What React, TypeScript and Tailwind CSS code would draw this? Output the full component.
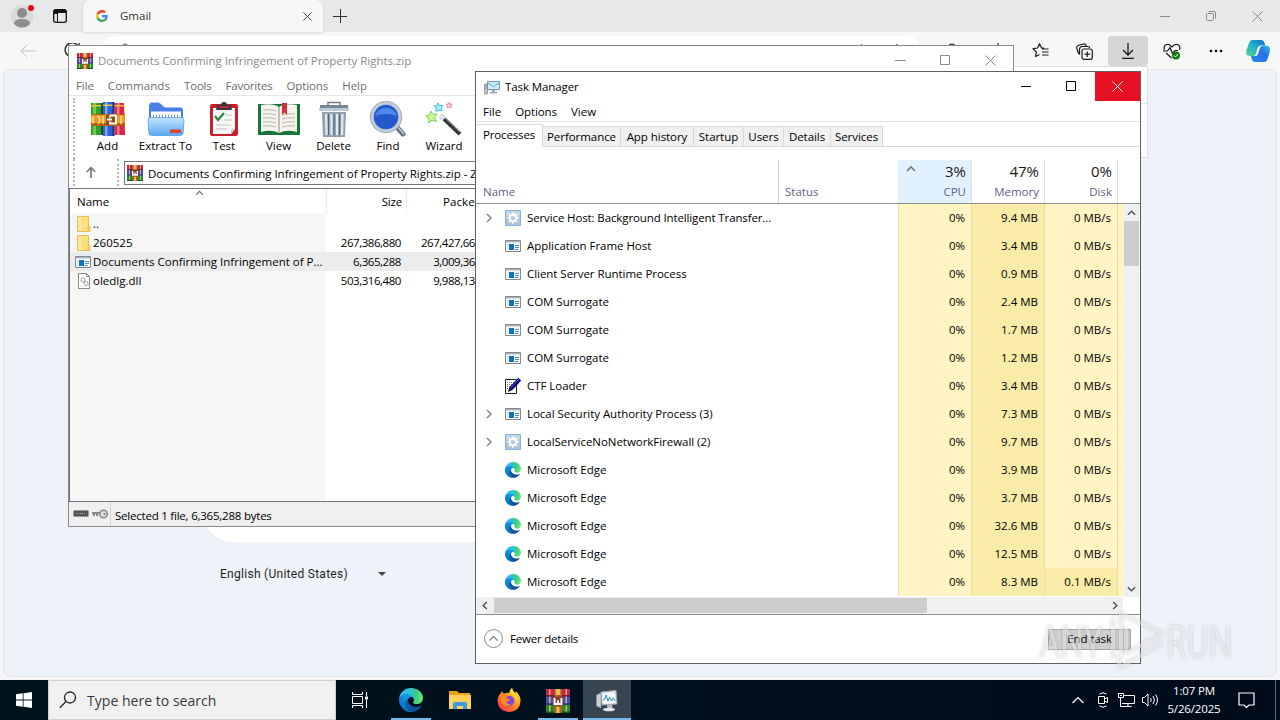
import type { ReactNode } from "react";

type Kind = "gear" | "app" | "ctf" | "edge";

const processes: { name: string; icon: Kind; group?: boolean; mem: string; disk: string }[] = [
  { name: "Service Host: Background Intelligent Transfer...", icon: "gear", group: true, mem: "9.4 MB", disk: "0 MB/s" },
  { name: "Application Frame Host", icon: "app", mem: "3.4 MB", disk: "0 MB/s" },
  { name: "Client Server Runtime Process", icon: "app", mem: "0.9 MB", disk: "0 MB/s" },
  { name: "COM Surrogate", icon: "app", mem: "2.4 MB", disk: "0 MB/s" },
  { name: "COM Surrogate", icon: "app", mem: "1.7 MB", disk: "0 MB/s" },
  { name: "COM Surrogate", icon: "app", mem: "1.2 MB", disk: "0 MB/s" },
  { name: "CTF Loader", icon: "ctf", mem: "3.4 MB", disk: "0 MB/s" },
  { name: "Local Security Authority Process (3)", icon: "app", group: true, mem: "7.3 MB", disk: "0 MB/s" },
  { name: "LocalServiceNoNetworkFirewall (2)", icon: "gear", group: true, mem: "9.7 MB", disk: "0 MB/s" },
  { name: "Microsoft Edge", icon: "edge", mem: "3.9 MB", disk: "0 MB/s" },
  { name: "Microsoft Edge", icon: "edge", mem: "3.7 MB", disk: "0 MB/s" },
  { name: "Microsoft Edge", icon: "edge", mem: "32.6 MB", disk: "0 MB/s" },
  { name: "Microsoft Edge", icon: "edge", mem: "12.5 MB", disk: "0 MB/s" },
  { name: "Microsoft Edge", icon: "edge", mem: "8.3 MB", disk: "0.1 MB/s" },
];

const files = [
  { name: "..", icon: "folder", size: "", packed: "" },
  { name: "260525", icon: "folder", size: "267,386,880", packed: "267,427,66" },
  { name: "Documents Confirming Infringement of P...", icon: "app", size: "6,365,288", packed: "3,009,36" },
  { name: "oledlg.dll", icon: "dll", size: "503,316,480", packed: "9,988,13" },
];

const tabs = [
  { label: "Performance", width: "w-[78px]" },
  { label: "App history", width: "w-[73px]" },
  { label: "Startup", width: "w-[50px]" },
  { label: "Users", width: "w-[40px]" },
  { label: "Details", width: "w-[47px]" },
  { label: "Services", width: "w-[52px]" },
];

/* ---------- icons ---------- */

function EdgeIcon({ className }: { className: string }) {
  return (
    <svg viewBox="0 0 256 256" className={className}>
      <defs>
        <linearGradient id="edgeA" x1="60" y1="177" x2="241" y2="177" gradientUnits="userSpaceOnUse">
          <stop offset="0" stopColor="#0c59a4" />
          <stop offset="1" stopColor="#114a8b" />
        </linearGradient>
        <linearGradient id="edgeB" x1="150" y1="100" x2="42" y2="222" gradientUnits="userSpaceOnUse">
          <stop offset="0" stopColor="#1b9de2" />
          <stop offset=".3" stopColor="#1595df" />
          <stop offset=".7" stopColor="#0680d7" />
          <stop offset="1" stopColor="#0078d4" />
        </linearGradient>
        <radialGradient id="edgeC" cx="26" cy="48" r="235" gradientUnits="userSpaceOnUse">
          <stop offset="0" stopColor="#35c1f1" />
          <stop offset=".3" stopColor="#2fbde6" />
          <stop offset=".65" stopColor="#36c98f" />
          <stop offset="1" stopColor="#66eb6e" />
        </radialGradient>
      </defs>
      <path fill="url(#edgeA)" d="M231 190.500c-3.400 1.800-6.900 3.400-10.400 4.700a101.800 101.800 0 0 1-35.900 6.500c-47.400 0-88.600-32.600-88.600-74.300a31.500 31.500 0 0 1 16.400-27.300c-42.800 1.800-53.800 46.400-53.800 72.500 0 73.900 68.100 81.400 82.800 81.400 7.900 0 19.800-2.300 27-4.600l1.300-.4a128.400 128.400 0 0 0 66.600-52.800 4 4 0 0 0-5.400-5.700z" />
      <path fill="url(#edgeB)" d="M105.700 241.400a79.200 79.200 0 0 1-22.700-21.300 80.700 80.700 0 0 1 29.500-120c3.100-1.500 8.500-4.100 15.500-4a32.400 32.400 0 0 1 25.700 13 31.900 31.900 0 0 1 6.300 18.700c0-.2 24.500-79.600-80-79.600-43.900 0-80 41.600-80 78.200a130.200 130.200 0 0 0 12.100 56 128 128 0 0 0 156.400 67.100 75.600 75.600 0 0 1-62.800-8z" />
      <path fill="url(#edgeC)" d="M152.300 148.900c-.8 1-3.300 2.500-3.300 5.600 0 2.600 1.700 5.100 4.700 7.200 14.400 10 41.500 8.700 41.600 8.700a59.600 59.600 0 0 0 30.300-8.400 61.400 61.400 0 0 0 30.400-52.800c.3-22.400-8-37.300-11.300-43.900C223.500 23.800 177.700 0 128 0A128 128 0 0 0 0 126.200c.5-36.500 36.800-66 80-66 3.500 0 23.500.3 42 10 16.300 8.600 24.900 19 30.900 29.200 6.200 10.700 7.200 24.200 7.200 29.500s-2.700 13.400-7.800 20z" />
    </svg>
  );
}

function RarIcon({ className }: { className: string }) {
  return (
    <svg viewBox="0 0 16 16" className={className}>
      <path fill="#c2245c" d="M0 0h16v5H0z" />
      <path fill="#3b52c4" d="M0 5h16v5.500H0z" />
      <path fill="#1e8a3c" d="M0 10.500h16V16H0z" />
      <path fill="#7a1638" d="M0 4h16v1H0z" />
      <path fill="#202f7c" d="M0 9.500h16v1H0z" />
      <path fill="#0d5522" d="M0 15h16v1H0z" />
      <path fill="#e9b23c" d="M2 0h1v4H2zM13 0h1v4h-1zM2 5h1v4.500H2zM13 5h1v4.500h-1zM2 11h1v4H2zM13 11h1v4h-1z" />
      <path fill="#b9601c" d="M5.500 0h5v16h-5z" />
      <path fill="#f2bd4b" d="M6.500 0h3v4h-3zM7 12h2v4H7z" />
      <path fill="#8f3a28" d="M4.500 5h7v6h-7z" />
      <path fill="none" stroke="#fff" strokeWidth="1.300" d="M5.700 6v4h4.600V6M8 7.500V10" />
    </svg>
  );
}

function AppIcon({ className }: { className: string }) {
  return (
    <svg viewBox="0 0 16 16" className={className}>
      <path fill="#fff" stroke="#7f8b96" d="M.5 2.500h15v11H.5z" />
      <path fill="#a9b5c0" d="M1 3h14v1.500H1z" />
      <path fill="#0d72c7" d="M4 6h5v6H4z" />
      <path fill="#cfe3f4" d="M2 6h1v6H2z" />
      <path stroke="#4f8fc9" d="M10 7.500h4M10 9.500h4M10 11.500h3" />
    </svg>
  );
}

function GearIcon() {
  return (
    <svg viewBox="0 0 16 16" className="size-4">
      <path fill="#a9c5df" stroke="#8fb0cf" d="M.5.5h15v15H.5z" />
      <path fill="#c0d6ea" d="M1 1h14v6H1z" />
      <circle cx="8" cy="8" r="3.200" fill="none" stroke="#fff" strokeWidth="2" />
      <path stroke="#fff" strokeWidth="2" d="M8 2.500v2M8 11.500v2M2.500 8h2M11.500 8h2M4.100 4.100l1.400 1.400M10.500 10.500l1.400 1.400M4.100 11.900l1.400-1.400M10.500 5.500l1.400-1.400" />
    </svg>
  );
}

function CtfIcon() {
  return (
    <svg viewBox="0 0 16 16" className="size-4">
      <path fill="#fff" stroke="#222" d="M.5 1.500h11v14H.5z" />
      <path stroke="#777" strokeDasharray="1 1" d="M2 4.500h8M2 6.500h8M2 8.500h6M2 10.500h4" />
      <path stroke="#0a0a78" strokeWidth="4" d="M14.800 1.200 5.500 11" />
      <path stroke="#8d93dd" strokeWidth=".6" d="M14 1 6 9.500" />
      <path fill="#111" d="m3 14 1.300-4.300L7 12.200z" />
    </svg>
  );
}

function ProcessIcon({ kind }: { kind: Kind }) {
  if (kind === "gear") return <GearIcon />;
  if (kind === "ctf") return <CtfIcon />;
  if (kind === "edge") return <EdgeIcon className="size-4" />;
  return <AppIcon className="size-4" />;
}

function MonitorIcon({ className }: { className: string }) {
  return (
    <svg viewBox="0 0 16 16" className={className}>
      <path fill="#b9c3cb" stroke="#7d8b96" strokeWidth=".7" d="M.5 5h3v10h-3z" />
      <path stroke="#5f6d78" strokeWidth=".6" d="M1 7h2M1 9h2" />
      <path fill="#c9eef9" stroke="#7d929e" d="M3.500 2.500h12v8h-12z" />
      <path fill="none" stroke="#3b8ba5" strokeWidth=".8" d="m4 4.500 3 1L9.500 8 12 5.500l3-1" />
      <path fill="#9faab2" d="M8 11h3v2H8zM6 13h7v1.500H6z" />
    </svg>
  );
}

function FolderIcon() {
  return (
    <svg viewBox="0 0 14 16" className="h-4 w-[14px]">
      <path fill="#fbdf82" stroke="#e5be50" d="M.5.5h11v15H.5z" />
      <path fill="#ffe9a0" d="M1 1h3v14H1z" />
      <path fill="#f9d566" stroke="#e2b443" strokeWidth=".7" d="M11 10.500h2v5h-2z" />
    </svg>
  );
}

function DllIcon() {
  return (
    <svg viewBox="0 0 14 16" className="h-4 w-[14px]">
      <path fill="#fff" stroke="#8a8a8a" d="M1.500.5h8l3 3v12h-11z" />
      <path fill="none" stroke="#8a8a8a" d="M9.500.5v3h3" />
      <circle cx="6" cy="7" r="2" fill="none" stroke="#8d97a1" strokeWidth="1.300" strokeDasharray="1 .6" />
      <circle cx="9" cy="10.500" r="2" fill="none" stroke="#8d97a1" strokeWidth="1.300" strokeDasharray="1 .6" />
    </svg>
  );
}

function AddIcon() {
  return (
    <svg viewBox="0 0 34 34" className="h-[34px] w-[34px]">
      <path fill="#2f9e2d" d="M0 1h11v32H0z" />
      <path fill="#2f62d8" d="M12 0h11v34H12z" />
      <path fill="#dd2447" d="M23.500 1H33l1 32H23.500z" />
      <path fill="#6fc94a" d="M2 1h3v32H2z" />
      <path fill="#7ba8ff" d="M14 0h2.500v34H14z" />
      <path fill="#ff7a8b" d="M26 1h2.500v32H26z" />
      <path fill="#efc43d" d="M0 3h11v1.500H0zM12 2.500h11V4H12zM23.500 3H34v1.500H23.500z" />
      <path fill="#14511b" d="M10 1h2v32h-2z" />
      <path fill="#152f77" d="M21.500 0h2v34h-2z" />
      <path fill="#b5600f" d="M0 12h34v12H0z" />
      <path fill="#ec9c2c" d="M0 13h34v8H0z" />
      <path fill="#8d4c1e" d="M15 13h9v10h-9z" />
      <path fill="none" stroke="#fff" strokeWidth="1.800" d="M19 13.500h6v8h-6v-2M19 13.500v2M16 17.500h5" />
      <path fill="none" stroke="#fbe09a" strokeWidth="1.500" d="M2 14.500v7M7 14q4 4 0 8M12 14v8M30 14v8" />
    </svg>
  );
}

function ExtractIcon() {
  return (
    <svg viewBox="0 0 38 34" className="h-[34px] w-[38px]">
      <defs>
        <linearGradient id="fold" x1="0" y1="0" x2="0" y2="1">
          <stop offset="0" stopColor="#c3e4ff" />
          <stop offset="1" stopColor="#5aa8f2" />
        </linearGradient>
      </defs>
      <path fill="#4c7ee8" d="M2 4q0-3.500 3-3.500h6q2 0 4 2.500t4 2.500h14q3 0 3 3V20H2z" />
      <path fill="#fff" d="M4 9.500h30V19H4z" />
      <path stroke="#7d93ad" strokeWidth="3" strokeDasharray="1 2" d="M6 14h26" />
      <path fill="url(#fold)" stroke="#5b9fe6" strokeWidth=".8" d="M1 18q0-2.500 2.500-2.500h31Q37 15.500 37 18l-.8 12.500q0 3-3.200 3H5q-3.200 0-3.200-3z" />
      <path fill="#d9432f" d="M23 27.500h11V31H23z" />
    </svg>
  );
}

function TestIcon() {
  return (
    <svg viewBox="0 0 28 34" className="h-[34px] w-[28px]">
      <rect x="0" y="2" width="28" height="32" rx="2" fill="#c8202f" />
      <path fill="#f8f8f6" d="M3 6h22v21l-4 5H3z" />
      <path fill="#3a3a3e" d="M7 3h4q0-3 3-3t3 3h4l1 5H6z" />
      <path fill="#bd2b38" d="M9 4h10v2H9z" />
      <path fill="none" stroke="#2c8a48" strokeWidth="2.200" d="m5 14 3 4 6-7" />
      <path stroke="#bfc1c5" strokeWidth="1.200" d="M15 13h7M14 18h8M6 23h15M6 27h11" />
      <path fill="#cfcfd3" d="m25 27-4 5v-5z" />
    </svg>
  );
}

function ViewIcon() {
  return (
    <svg viewBox="0 0 42 34" className="h-[34px] w-[42px]">
      <path fill="#15753a" d="M0 2h42v31H0z" />
      <path fill="#f5f3ec" d="M3 3q12-2 18 2v26q-8-4-18-1zM39 3q-12-2-18 2v26q8-4 18-1z" />
      <path stroke="#b9b7ae" d="M5 8q8-1 13 1M5 12q8-1 13 1M5 16q8-1 13 1M5 20q8-1 13 1M5 24q8-1 13 1M37 12q-8-1-13 1M37 16q-8-1-13 1M37 20q-8-1-13 1M37 24q-8-1-13 1" fill="none" />
      <path stroke="#8d8b82" d="M21 5v26" />
      <path fill="#cf2f35" d="M24 1h5v12l-2.500-2.500L24 13z" />
    </svg>
  );
}

function DeleteIcon() {
  return (
    <svg viewBox="0 0 30 36" className="h-[36px] w-[30px]">
      <path fill="none" stroke="#6f7d8c" strokeWidth="1.500" d="M9 5V1.500h12V5" />
      <rect x="1" y="4" width="28" height="3" fill="#76879a" />
      <rect x="0" y="7" width="30" height="3" rx="1" fill="#bcc9d6" />
      <path fill="#8fa0b3" d="M3 11h24l-1 25H4z" />
      <path stroke="#e3ebf2" strokeWidth="2.200" d="M7 13l.5 21M12.500 13v21M18 13v21M23.500 13l-.5 21" />
      <path stroke="#536474" d="M9.500 13v21M15 13v21M20.500 13v21" />
    </svg>
  );
}

function FindIcon() {
  return (
    <svg viewBox="0 0 38 36" className="h-[36px] w-[38px]">
      <path stroke="#65717e" strokeWidth="5" strokeLinecap="round" d="m26 24 8 9" />
      <path stroke="#c6ced6" strokeWidth="1.500" d="m27 24 8 9" />
      <circle cx="17" cy="16" r="14" fill="#2458cd" stroke="#c3cdd7" strokeWidth="3.500" />
      <circle cx="17" cy="16" r="15.800" fill="none" stroke="#7c8996" strokeWidth=".6" />
      <path fill="#4f87ec" d="M6 15a11.500 11.500 0 0 1 22 0q-11-4-22 0z" />
    </svg>
  );
}

function WizardIcon() {
  return (
    <svg viewBox="0 0 36 34" className="h-[34px] w-[36px]">
      <path stroke="#33363a" strokeWidth="4" d="m15 14 19 18" />
      <path stroke="#a9adb2" strokeWidth="1" d="m16 13 18 17" />
      <path stroke="#e2e4e7" strokeWidth="4" d="m14 13 4 4" />
      <path fill="#d3f59a" stroke="#7fd04a" d="m5 9 2 3.500 4-.5-2.500 3.500 2 4-4.500-1.500L3 21v-4.500L-.5 14l4-1z" />
      <path fill="#a8ecfb" stroke="#3fc3e6" d="m12 1 1.500 2.500H17L15 6l1 3-3-1-3 1.500V6L8 4l3-.5z" />
      <path fill="#ffd5db" stroke="#ee7487" strokeWidth=".8" d="m23 .5 1 1.700h2l-1.200 1.500.5 2-2-.8-2 1v-2l-1.300-1.500 2-.3z" />
    </svg>
  );
}

function Chevron({ d, className }: { d: string; className: string }) {
  return (
    <svg viewBox="0 0 10 10" className={className}>
      <path d={d} fill="none" stroke="currentColor" strokeWidth="1.600" />
    </svg>
  );
}

function CloseGlyph({ className }: { className: string }) {
  return (
    <svg viewBox="0 0 11 11" className={className}>
      <path stroke="currentColor" d="m.5.5 10 10m0-10-10 10" />
    </svg>
  );
}

function MaxGlyph() {
  return (
    <svg viewBox="0 0 11 11" className="size-[11px]">
      <path fill="none" stroke="currentColor" d="M.5.5h9v9h-9z" />
    </svg>
  );
}

/* ---------- browser ---------- */

function ToolButton({ children }: { children: ReactNode }) {
  return <div className="flex h-[30px] w-10 items-center justify-center rounded">{children}</div>;
}

function Browser() {
  return (
    <div className="flex h-[680px] flex-col bg-[#f7f7f7]">
      <div className="flex h-8 shrink-0 bg-[#e8e8e8]">
        <div className="flex w-[83px] items-center pl-[10px]">
          <svg viewBox="0 0 26 26" className="size-[26px]">
            <circle cx="12" cy="13.500" r="11.500" fill="#dcdad8" />
            <circle cx="12" cy="10" r="5" fill="#8f8d8b" />
            <path fill="#8f8d8b" d="M4 20.500q0-4.500 8-4.500t8 4.500q-3 4-8 4t-8-4z" />
            <circle cx="21" cy="5" r="3" fill="#d90b17" />
          </svg>
          <svg viewBox="0 0 14 14" className="ml-[17px] size-[14px]">
            <rect x=".7" y=".7" width="12.600" height="12.600" rx="2" fill="none" stroke="#111" strokeWidth="1.300" />
            <path fill="#111" d="M1 1h12v3H1zM1 3h3.500v2H1z" />
            <path stroke="#111" d="M4.500 4v9" />
          </svg>
        </div>
        <div className="flex w-60 items-center rounded-t-lg bg-[#f7f7f7] pl-[13px] shadow">
          <svg viewBox="0 0 48 48" className="size-3">
            <path fill="#EA4335" d="M24 9.500c3.500 0 6.700 1.200 9.200 3.600l6.900-6.900C35.900 2.400 30.500 0 24 0 14.600 0 6.500 5.400 2.600 13.200l8 6.200C12.400 13.700 17.700 9.500 24 9.500z" />
            <path fill="#4285F4" d="M47 24.600c0-1.600-.2-3.100-.4-4.600H24v9h12.900c-.6 3-2.200 5.500-4.700 7.200l7.700 6C44.400 38 47 31.800 47 24.600z" />
            <path fill="#FBBC05" d="M10.500 28.600c-.5-1.500-.8-3-.8-4.600s.3-3.100.8-4.600l-8-6.200A24 24 0 0 0 0 24c0 3.900.9 7.500 2.600 10.800z" />
            <path fill="#34A853" d="M24 48c6.500 0 11.900-2.100 15.900-5.800l-7.700-6c-2.200 1.500-4.900 2.300-8.200 2.300-6.300 0-11.600-4.200-13.500-9.900l-8 6.200C6.500 42.600 14.600 48 24 48z" />
          </svg>
          <span className="ml-3 flex-1 text-[11.500px] text-[#333]">Gmail</span>
          <CloseGlyph className="mr-[11px] size-[9px] text-[#222]" />
        </div>
        <svg viewBox="0 0 14 14" className="mt-[9px] ml-[10px] size-[14px]">
          <path stroke="#333" d="M7.500 0v14M0 7.500h14" />
        </svg>
        <div className="ml-auto flex items-center gap-9 pr-[17px] text-[#8a8a8a]">
          <svg viewBox="0 0 10 10" className="size-[10px]"><path stroke="currentColor" d="M0 5.500h10" /></svg>
          <svg viewBox="0 0 10 10" className="size-[10px]">
            <rect x=".5" y="2.500" width="7" height="7" rx="1" fill="none" stroke="currentColor" />
            <path fill="none" stroke="currentColor" d="M2.500.5H8q1.500 0 1.500 1.500v5.500" />
          </svg>
          <CloseGlyph className="size-[11px]" />
        </div>
      </div>

      <div className="flex h-[37px] shrink-0 items-start pt-1">
        <svg viewBox="0 0 16 14" className="mt-[8px] ml-[20px] h-[14px] w-4">
          <path fill="none" stroke="#c2c2c2" d="M16 7H1m6-6L1 7l6 6" />
        </svg>
        <svg viewBox="0 0 16 16" className="mt-[7px] ml-7 size-4">
          <path fill="none" stroke="#222" strokeWidth="1.300" d="M14.500 4A7 7 0 1 0 15 8M15 0v4.500h-4.500" />
        </svg>
        <div className="ml-[22px] flex h-7 w-[818px] rounded-full bg-white pl-[18px]">
          <svg viewBox="0 0 10 12" className="mt-[7px] h-3 w-[10px]">
            <path fill="none" stroke="#555" d="M2.500 5V3.500a2.500 2.500 0 0 1 5 0V5M1 5h8v6H1z" />
          </svg>
          <svg viewBox="0 0 50 12" className="mt-[6px] ml-auto mr-4 h-3 w-[50px]">
            <path fill="none" stroke="#777" d="m7 2 4 4M40 6l3-4 3 4" />
          </svg>
        </div>
        <svg viewBox="0 0 14 14" className="mt-[7px] ml-[25px] size-[14px]">
          <path fill="none" stroke="#222" strokeWidth="1.200" d="M4 4q0-3 3-3t3 3v6H4z" />
        </svg>
        <svg viewBox="0 0 14 14" className="mt-[7px] ml-[32px] size-[14px]">
          <path fill="none" stroke="#222" strokeWidth="1.200" d="M7 0v9M2 3h10v8H2z" />
        </svg>
        <div className="ml-auto flex gap-[4px] pr-[4px]">
          <ToolButton>
            <svg viewBox="0 0 17 16" className="h-4 w-[17px]">
              <path fill="none" stroke="#1a1a1a" strokeWidth="1.200" strokeLinejoin="round" d="M12 5 9.500 4.800 7.500.8 5.500 5 1 5.700l3.300 3.200-.8 4.600L7.500 11.500M10 6h6.500M10 9h6.500M10 12h6.500" />
            </svg>
          </ToolButton>
          <ToolButton>
            <svg viewBox="0 0 17 17" className="size-[17px]">
              <path fill="none" stroke="#1a1a1a" strokeWidth="1.200" d="M3.500 11.500Q2 9.500 1.200 7L.8 5Q.5 3 2 2.500L8 1q1.700-.2 2 1.200l.3 1.300" />
              <path fill="none" stroke="#1a1a1a" strokeWidth="1.200" d="M3.500 11.500V6.500q0-3 3-3H12q1.500 0 1.700 1.500" />
              <rect x="6" y="6" width="10.300" height="10.300" rx="2" fill="#f7f7f7" stroke="#1a1a1a" strokeWidth="1.200" />
              <path stroke="#1a1a1a" strokeWidth="1.200" d="M11.200 8.500v5.500M8.500 11.200H14" />
            </svg>
          </ToolButton>
          <div className="flex h-[30px] w-10 items-center justify-center rounded bg-[#d6d6d6]">
            <svg viewBox="0 0 14 16" className="h-4 w-[14px]">
              <path fill="none" stroke="#1a1a1a" strokeWidth="1.300" d="M7 0v12M2 7l5 5 5-5M1 15.300h12" />
            </svg>
          </div>
          <ToolButton>
            <svg viewBox="0 0 18 17" className="h-[17px] w-[18px]">
              <path fill="none" stroke="#1a1a1a" strokeWidth="1.200" d="M1.500 7Q0 3 3.500 1.500 6.500.5 9 4q2.500-3.500 5.500-2.500Q18 3 16.500 7M0 8h4.500L7 4.500l2.500 6L12 7.500h3M3 10l5.500 5" />
              <circle cx="13" cy="12.500" r="4" fill="#107c10" />
              <path fill="none" stroke="#fff" d="m11 12.500 1.500 1.500 2.500-3" />
            </svg>
          </ToolButton>
          <ToolButton>
            <svg viewBox="0 0 14 4" className="h-1 w-[14px]">
              <circle cx="2" cy="2" r="1.300" /><circle cx="7" cy="2" r="1.300" /><circle cx="12" cy="2" r="1.300" />
            </svg>
          </ToolButton>
          <div className="flex h-[30px] w-9 items-center justify-center">
            <svg viewBox="0 0 24 22" className="h-[22px] w-6">
              <defs>
                <linearGradient id="cpA" x1="0" y1="1" x2="1" y2="0">
                  <stop offset="0" stopColor="#5ad17c" /><stop offset=".5" stopColor="#22b4cf" /><stop offset="1" stopColor="#1268c8" />
                </linearGradient>
                <linearGradient id="cpB" x1="0" y1="1" x2="1" y2="0">
                  <stop offset="0" stopColor="#1f8cf0" /><stop offset=".6" stopColor="#2b6fe4" /><stop offset="1" stopColor="#2fc3f3" />
                </linearGradient>
              </defs>
              <path fill="url(#cpA)" d="M6 0h9q2.500 0 3.500 3l.8 2.500H15q-2 0-2.800 2.500L10.500 14q-1 2-3 2H4q-5 0-3.500-6L3 3q1-3 3-3z" />
              <path fill="url(#cpB)" d="M18 22H9q-2.500 0-3.300-3L5 16h3.500q2.500 0 3.200-2.500L13.500 8q.8-2.200 3-2.200H20q5 0 3.800 6L21.500 19q-1 3-3.500 3z" />
              <path fill="#f7f7f7" d="M11.500 8q.8-2.500 3.500-2.500h.8q-1.300.8-1.900 2.700l-1.600 5.300q-.7 2.500-3.700 2.500H8q1.500-.7 2-2.500z" />
            </svg>
          </div>
        </div>
      </div>

      <div className="mx-[3px] mb-[3px] flex-1 overflow-hidden rounded-lg border border-[#e2e4e8] bg-[#eef2f9]">
        <div className="ml-[200px] h-[472px] w-[860px] rounded-[28px] bg-white" />
        <div className="mt-[24px] ml-[216px] flex items-center text-[#1f1f1f]">
          <span className="w-[158px] font-['Roboto',sans-serif] text-xs leading-4 tracking-[0.28px]">English (United States)</span>
          <svg viewBox="0 0 8 4" className="h-1 w-2"><path fill="#444" d="M0 0h8L4 4z" /></svg>
        </div>
      </div>
    </div>
  );
}

/* ---------- archive window ---------- */

function ArchiveWindow() {
  const buttons = [
    { label: "Add", icon: <AddIcon />, width: "w-[45px]" },
    { label: "Extract To", icon: <ExtractIcon />, width: "w-[71px]" },
    { label: "Test", icon: <TestIcon />, width: "w-[46px]" },
    { label: "View", icon: <ViewIcon />, width: "w-[63px]" },
    { label: "Delete", icon: <DeleteIcon />, width: "w-[47px]" },
    { label: "Find", icon: <FindIcon />, width: "w-[62px]" },
    { label: "Wizard", icon: <WizardIcon />, width: "w-[50px]" },
  ];

  return (
    <div className="absolute top-[45px] left-[68px] flex h-[482px] w-[946px] flex-col border border-[#8b8b8b] bg-white text-[11.500px] whitespace-nowrap">
      <div className="flex h-[30px] shrink-0 items-center pl-2 text-[#8b8b8b]">
        <RarIcon className="mb-px size-4" />
        <span className="ml-[5px] flex-1 tracking-[-0.02px]">Documents Confirming Infringement of Property Rights.zip</span>
        <div className="mb-px flex gap-[34px] pr-[17px]">
          <svg viewBox="0 0 11 11" className="size-[11px]"><path stroke="currentColor" d="M0 5.500h11" /></svg>
          <MaxGlyph />
          <CloseGlyph className="size-[11px]" />
        </div>
      </div>
      <div className="flex h-5 shrink-0 items-center gap-[14px] border-b border-[#e6e6e6] pl-[7px] text-[#6d6d6d]">
        <span className="tracking-[-0.1px]">File</span>
        <span className="tracking-[0.1px]">Commands</span>
        <span className="tracking-[-0.2px]">Tools</span>
        <span className="tracking-[-0.2px]">Favorites</span>
        <span className="tracking-[-0.1px]">Options</span>
        <span>Help</span>
      </div>
      <div className="flex h-[63px] shrink-0 pl-[4px]">
        <div className="mt-[2px] w-0 border-l-2 border-dotted border-[#b5b5b5]" />
        <div className="ml-[10px] flex">
          {buttons.map((b) => (
            <div key={b.label} className={`flex flex-col items-center pt-[5px] ${b.width}`}>
              <div className="flex h-[36px] items-center justify-center">{b.icon}</div>
              <span className="text-black">{b.label}</span>
            </div>
          ))}
        </div>
      </div>
      <div className="flex h-[29px] shrink-0 pl-[4px]">
        <div className="h-[27px] w-0 border-l-2 border-dotted border-[#b5b5b5]" />
        <svg viewBox="0 0 10 12" className="mt-[7px] ml-[11px] h-3 w-[10px]">
          <path fill="none" stroke="#7c7c7c" strokeWidth="1.800" d="M5 12V1.500M.8 6 5 1.500 9.200 6" />
        </svg>
        <div className="ml-[21px] h-[27px] w-0 border-l-2 border-dotted border-[#b5b5b5]" />
        <div className="mt-[2px] ml-[5px] flex h-6 flex-1 items-center border border-[#777] pl-[2px]">
          <RarIcon className="size-4" />
          <span className="mt-px ml-[5px] tracking-[-0.03px]">Documents Confirming Infringement of Property Rights.zip - ZIP archive</span>
        </div>
      </div>
      <div className="flex h-[314px] shrink-0 flex-col border border-[#70747a]">
        <div className="flex h-[25px] shrink-0 text-black">
          <div className="relative flex w-[257px] items-center border-r border-[#ececec] pl-[7px]">
            Name
            <Chevron d="M1 7l4-4 4 4" className="absolute top-0 left-[125px] h-2 w-[9px] text-[#666]" />
          </div>
          <div className="flex w-20 items-center justify-end border-r border-[#ececec] pr-[4px] tracking-[-0.2px]">Size</div>
          <div className="flex w-[70px] items-center pl-[36px] tracking-[0.1px]">Packed</div>
        </div>
        <div className="flex-1 bg-[linear-gradient(to_right,#f6f6f6_256px,#fff_256px)]">
          {files.map((f) => (
            <div key={f.name} className={`flex h-[19px] items-center text-black ${f.icon === "app" ? "bg-[#ececec]" : ""}`}>
              <div className="flex w-[256px] items-center pl-1">
                <div className="flex w-[19px] justify-center">
                  {f.icon === "folder" && <FolderIcon />}
                  {f.icon === "app" && <AppIcon className="mr-px size-4" />}
                  {f.icon === "dll" && <DllIcon />}
                </div>
                <span>{f.name}</span>
              </div>
              <span className="w-[75px] text-right tracking-[-0.45px]">{f.size}</span>
              <span className="w-[74px] text-right tracking-[-0.45px]">{f.packed}</span>
            </div>
          ))}
        </div>
      </div>
      <div className="flex flex-1 items-center bg-[#efefef] pl-1 text-black">
        <svg viewBox="0 0 16 8" className="h-2 w-4">
          <rect x=".5" y=".5" width="15" height="6" rx="1" fill="#555" stroke="#999" />
          <path stroke="#aaa" strokeDasharray="1 1" d="M3 3.500h9" />
        </svg>
        <svg viewBox="0 0 17 10" className="ml-[3px] h-[10px] w-[17px]">
          <path fill="none" stroke="#888" strokeWidth="2" d="M0 4h9M2 4v3M5 4v3" />
          <circle cx="11.500" cy="5" r="3.800" fill="#ddd" stroke="#888" strokeWidth="1.500" />
          <circle cx="12.500" cy="5" r="1" fill="#777" />
        </svg>
        <div className="ml-[1px] h-full border-l border-[#d5d5d5]" />
        <span className="mt-[3px] ml-1 tracking-[-0.22px]">Selected 1 file, 6,365,288 bytes</span>
      </div>
    </div>
  );
}

/* ---------- task manager window ---------- */

function TaskManager() {
  return (
    <div className="absolute top-[71px] left-[475px] flex h-[593px] w-[666px] flex-col border border-[#5c5f63] bg-white text-[11.500px] whitespace-nowrap text-black">
      <div className="flex h-[29px] shrink-0 items-center pl-2">
        <MonitorIcon className="size-4" />
        <span className="ml-[5px] flex-1 tracking-[-0.1px]">Task Manager</span>
        <svg viewBox="0 0 10 11" className="mr-[35px] h-[11px] w-[10px]"><path stroke="currentColor" d="M0 5.500h10" /></svg>
        <MaxGlyph />
        <div className="ml-[18px] flex h-full w-[45px] items-center justify-center bg-[#e81123] text-white">
          <CloseGlyph className="size-[11px]" />
        </div>
      </div>
      <div className="flex h-[21px] shrink-0 items-center gap-[14px] border-b border-[#e3e3e3] pt-px pl-[7px]">
        <span>File</span>
        <span className="tracking-[-0.1px]">Options</span>
        <span>View</span>
      </div>
      <div className="flex h-[25px] shrink-0 items-end">
        <div className="flex h-[23px] w-[67px] items-center justify-center border-t border-r border-[#dcdcdc] pb-[2px] tracking-[-0.15px]">Processes</div>
        {tabs.map((t) => (
          <div key={t.label} className={`flex h-[21px] items-center justify-center border-t border-r border-b border-[#d9d9d9] bg-[#f0f0f0] tracking-[-0.05px] ${t.width}`}>
            {t.label}
          </div>
        ))}
        <div className="h-full flex-1 border-b border-[#d9d9d9]" />
      </div>

      <div className="mt-[13px] flex h-[44px] shrink-0 border-b border-[#8f8f8f] leading-4 text-[#5b6682]">
        <div className="flex w-[303px] items-end border-r border-[#cfcfcf] pb-[3px] pl-[7px]">Name</div>
        <div className="flex w-[119px] items-end pb-[3px] pl-[6px]">Status</div>
        <HeadCell value="3%" label="CPU" width="w-[74px]" active />
        <HeadCell value="47%" label="Memory" width="w-[73px]" />
        <HeadCell value="0%" label="Disk" width="w-[73px]" />
      </div>

      <div className="flex h-[393px] shrink-0">
        <div className="flex-1">
          {processes.map((p, i) => (
            <div key={i} className="flex h-7 leading-7">
              <div className="flex w-[422px] items-center">
                <div className="w-[29px] pl-[8px]">
                  {p.group && <Chevron d="M3 1l4 4-4 4" className="size-[10px] text-[#8c8c8c]" />}
                </div>
                <ProcessIcon kind={p.icon} />
                <span className={`ml-[6px] ${p.name.length > 40 ? "tracking-[-0.12px]" : "tracking-[-0.04px]"}`}>{p.name}</span>
              </div>
              <div className="w-[73px] border-l border-[#eadf9f] bg-[#fff4c4] pr-[6px] text-right">0%</div>
              <div className="w-[73px] border-l border-[#eadf9f] bg-[#f9eca8] pr-[6px] text-right">{p.mem}</div>
              <div className={`w-[74px] border-x border-[#eadf9f] pr-[6px] text-right ${p.disk === "0 MB/s" ? "bg-[#fff4c4]" : "bg-[#f9eca8]"}`}>{p.disk}</div>
              <div className="w-[6px] bg-[#fff4c4]" />
            </div>
          ))}
        </div>
        <div className="flex w-4 flex-col items-start bg-[#f0f0f0] text-[#505050]">
          <Chevron d="M1 7l4-4 4 4" className="mt-1 ml-[3px] h-[10px] w-[9px] shrink-0" />
          <div className="mt-[3px] h-[45px] w-[15px] shrink-0 bg-[#cdcdcd]" />
          <Chevron d="M1 3l4 4 4-4" className="mt-auto mb-[3px] ml-[3px] h-[10px] w-[9px] shrink-0" />
        </div>
      </div>

      <div className="flex h-[18px] shrink-0 border-b border-[#8f8f8f]">
        <div className="flex w-[647px] items-center bg-[#f0f0f0] pl-1 text-[#505050]">
          <Chevron d="M7 1 3 5l4 4" className="h-[9px] w-[10px]" />
          <div className="ml-1 h-[15px] w-[433px] bg-[#cdcdcd]" />
          <Chevron d="M3 1l4 4-4 4" className="mr-[3px] ml-auto h-[9px] w-[10px]" />
        </div>
      </div>

      <div className="flex flex-1 items-center pr-[9px] pl-[7px]">
        <svg viewBox="0 0 20 20" className="size-5">
          <circle cx="10.500" cy="9.500" r="9" fill="none" stroke="#8a8a8a" />
          <path fill="none" stroke="#8a8a8a" strokeWidth="1.300" d="m6.500 11.500 4-4 4 4" />
        </svg>
        <span className="ml-[7px] tracking-[-0.2px]">Fewer details</span>
        <div className="ml-auto flex h-[21px] w-[83px] items-center justify-center border border-[#a5a5a5] bg-[#cfcfcf] tracking-[-0.1px]">End task</div>
      </div>
    </div>
  );
}

function HeadCell({ value, label, width, active }: { value: string; label: string; width: string; active?: boolean }) {
  return (
    <div className={`relative flex flex-col items-end border-r border-[#e0e0e0] pt-px pr-[5px] ${width} ${active ? "bg-[#e1f1ff]" : ""}`}>
      {active && <Chevron d="M1 7l4-4 4 4" className="absolute top-1 left-[8px] size-[10px] text-[#777]" />}
      <span className="text-[15px] leading-5 text-[#1b1b1b]">{value}</span>
      <span className="mt-[3px]">{label}</span>
    </div>
  );
}

/* ---------- taskbar ---------- */

function Taskbar() {
  return (
    <div className="flex h-10 bg-[linear-gradient(to_right,#00141c,#000e1c_60%,#000b1a)] text-white">
      <div className="flex w-12 items-center justify-center">
        <svg viewBox="0 0 16 16" className="size-4">
          <path fill="#fff" d="M0 2.200 6.700 1.300v6.300H0zM7.500 1.200 16 0v7.600H7.500zM0 8.400h6.700v6.300L0 13.800zM7.500 8.400H16V16l-8.500-1.200z" />
        </svg>
      </div>
      <div className="flex w-72 items-center border border-[#cfcfcf] bg-[#f1f1f1] pl-[10px] text-[#3a3a3a]">
        <svg viewBox="0 0 18 18" className="size-[18px]">
          <circle cx="11" cy="6.500" r="5.500" fill="none" stroke="#222" strokeWidth="1.300" />
          <path stroke="#222" strokeWidth="1.300" d="M7 10.500.8 16.800" />
        </svg>
        <span className="mt-px ml-[10px] text-sm tracking-[0.03px]">Type here to search</span>
      </div>
      <div className="flex">
        <div className="flex w-[49px] items-center justify-center">
          <svg viewBox="0 0 17 16" className="h-4 w-[17px]">
            <path fill="none" stroke="#fff" d="M.5 0v2.500h10V0M.5 16v-2.500h10V16M.5 4.500h10v7H.5zM14.500 0v4M14.500 8v8" />
            <path fill="#fff" d="M13 4.500h3v3h-3z" />
          </svg>
        </div>
        <div className="ml-px flex w-[50px] flex-col items-center justify-between pt-2">
          <EdgeIcon className="size-6" />
          <div className="h-[2px] w-10 bg-[#76b9ed]" />
        </div>
        <div className="flex w-12 items-center justify-center">
          <svg viewBox="0 0 22 18" className="h-[18px] w-[22px]">
            <path fill="#e8a317" d="M0 0h8l2 2h11v5H0z" />
            <path fill="#fdd15c" d="M0 4h22v14H0z" />
            <path fill="#3f9be0" d="M4 18v-5q0-2 2-2h10q2 0 2 2v5h-4v-3H8v3z" />
          </svg>
        </div>
        <div className="flex w-[50px] items-center justify-center">
          <svg viewBox="0 0 24 24" className="size-6">
            <defs>
              <linearGradient id="fx" x1="1" y1="0" x2="0" y2="1">
                <stop offset="0" stopColor="#ffe43c" /><stop offset=".45" stopColor="#ff9421" /><stop offset="1" stopColor="#f5205f" />
              </linearGradient>
            </defs>
            <path fill="url(#fx)" d="M4.500 3q1 2 3 2.500Q10 4.500 12 5q.5-3 3-5 .3 3 3.500 5 .5-.5.3-2Q24 8 23.500 13.500 22.500 24 12 24 1.500 23.500.6 13.500.4 8 4 5z" />
            <circle cx="12" cy="13" r="5.300" fill="#7b45e0" />
            <path fill="#ff8a1e" d="M3 9q4-4 9-1-3 .3-3 2 3 .3 4 2-2 2-4 2 2 3 5.500 2-3 3-7 1.500Q3 15 3 9z" />
            <path fill="#ffd83a" d="M15 0q.3 3 4 6 2.500 4 1 8-1-5-5-7.500T15 0z" />
          </svg>
        </div>
        <div className="flex w-[48px] flex-col items-center justify-between pt-[9px]">
          <RarIcon className="size-6" />
          <div className="h-[2px] w-10 bg-[#76b9ed]" />
        </div>
        <div className="ml-[1px] flex w-12 flex-col items-center justify-between bg-[#36454f] pt-[9px]">
          <svg viewBox="0 0 24 24" className="size-6">
            <path fill="#c9cfd4" stroke="#8c969e" strokeWidth=".6" d="M1.500 6 6 4v15l-4.500-2z" />
            <path fill="#dfe5e9" stroke="#9aa5ad" d="m6 3 15-1.500L22 15 7 16z" />
            <path fill="#f2f8fb" d="m7.500 4.500 12-1.300.8 10.500-12.300 1z" />
            <path fill="none" stroke="#3390b8" d="m8 11 2-1 1-4 2 6 1.500-4 2 4 1.500-3 2 3" />
            <path fill="#b8c0c6" d="m12 16 5-.5.5 4-5 .5z" />
            <ellipse cx="14" cy="20.500" rx="6" ry="1.800" fill="#e5e8ea" />
          </svg>
          <div className="h-[2px] w-12 bg-[#76b9ed]" />
        </div>
      </div>
      <div className="ml-auto flex items-center">
        <svg viewBox="0 0 12 8" className="h-2 w-3"><path fill="none" stroke="#fff" strokeWidth="1.200" d="m.5 7 5.500-5.500L11.500 7" /></svg>
        <svg viewBox="0 0 12 16" className="ml-[13px] h-4 w-3">
          <path fill="none" stroke="#fff" d="M1.500 4.500h6v7h-6zM7.500 7l3-1.500v5L7.500 9M2.500 2Q6-.5 9.500 2M2.500 14q3.500 2.500 7 0" />
        </svg>
        <svg viewBox="0 0 17 14" className="ml-[9px] h-[14px] w-[17px]">
          <path fill="none" stroke="#fff" d="M5 2.500h11.500v8H4M.5.5h5v4h-5zM2.500 4.500v9M2.500 13.500h11M10 10.500v3M2 2.500h2" />
        </svg>
        <svg viewBox="0 0 17 14" className="ml-[7px] h-[14px] w-[17px]">
          <path fill="none" stroke="#fff" d="M.5 4.500h2L6 1v12L2.500 9.500h-2zM8.500 5q1.500 2 0 4M11 3q3 4 0 8M13.500 1.500q4 5.500 0 11" />
        </svg>
        <div className="ml-[7px] flex w-[56px] flex-col items-center text-[11.500px] leading-[18px] tracking-[-0.15px] whitespace-nowrap">
          <span>1:07 PM</span>
          <span>5/26/2025</span>
        </div>
        <svg viewBox="0 0 17 17" className="ml-[16px] size-[17px]">
          <path fill="none" stroke="#fff" strokeWidth="1.200" d="M1 1h15v12h-5l-2.500 2.500L6 13H1z" />
        </svg>
        <div className="ml-[20px] h-10 w-[5px] border-l border-[#5b6270]" />
      </div>
    </div>
  );
}

function Watermark() {
  return (
    <div className="absolute top-[610px] left-[1039px] flex h-16 w-[200px] items-center text-white/45 [filter:drop-shadow(0_0_1.500px_rgba(70,70,70,.5))]">
      <span className="w-[67px] shrink-0 origin-left scale-x-[0.71] font-['Roboto',sans-serif] text-[46px] leading-none">ANY</span>
      <svg viewBox="0 0 60 64" className="h-16 w-[60px] shrink-0">
        <path fill="none" stroke="currentColor" strokeWidth="4" strokeLinejoin="round" d="M15 46V3l42 21-37 19V17" />
        <path fill="none" stroke="currentColor" strokeWidth="4" strokeLinejoin="round" d="M7 8v40M57 32 13 58V46" />
      </svg>
      <span className="shrink-0 origin-left scale-x-[0.73] font-['Roboto',sans-serif] text-[46px] leading-none">RUN</span>
    </div>
  );
}

export default function App() {
  return (
    <main className="relative h-[720px] w-[1280px] overflow-hidden font-['Open_Sans','Noto_Sans',sans-serif]">
      <Browser />
      {/* downloads flyout, mostly covered by the windows */}
      <div className="absolute top-[66px] left-[788px] h-[92px] w-[360px] border border-[#dddfe4] bg-white">
        <div className="mt-[36px] border-t border-[#e4e4e8]" />
      </div>
      <ArchiveWindow />
      <TaskManager />
      <Taskbar />
      <Watermark />
    </main>
  );
}
